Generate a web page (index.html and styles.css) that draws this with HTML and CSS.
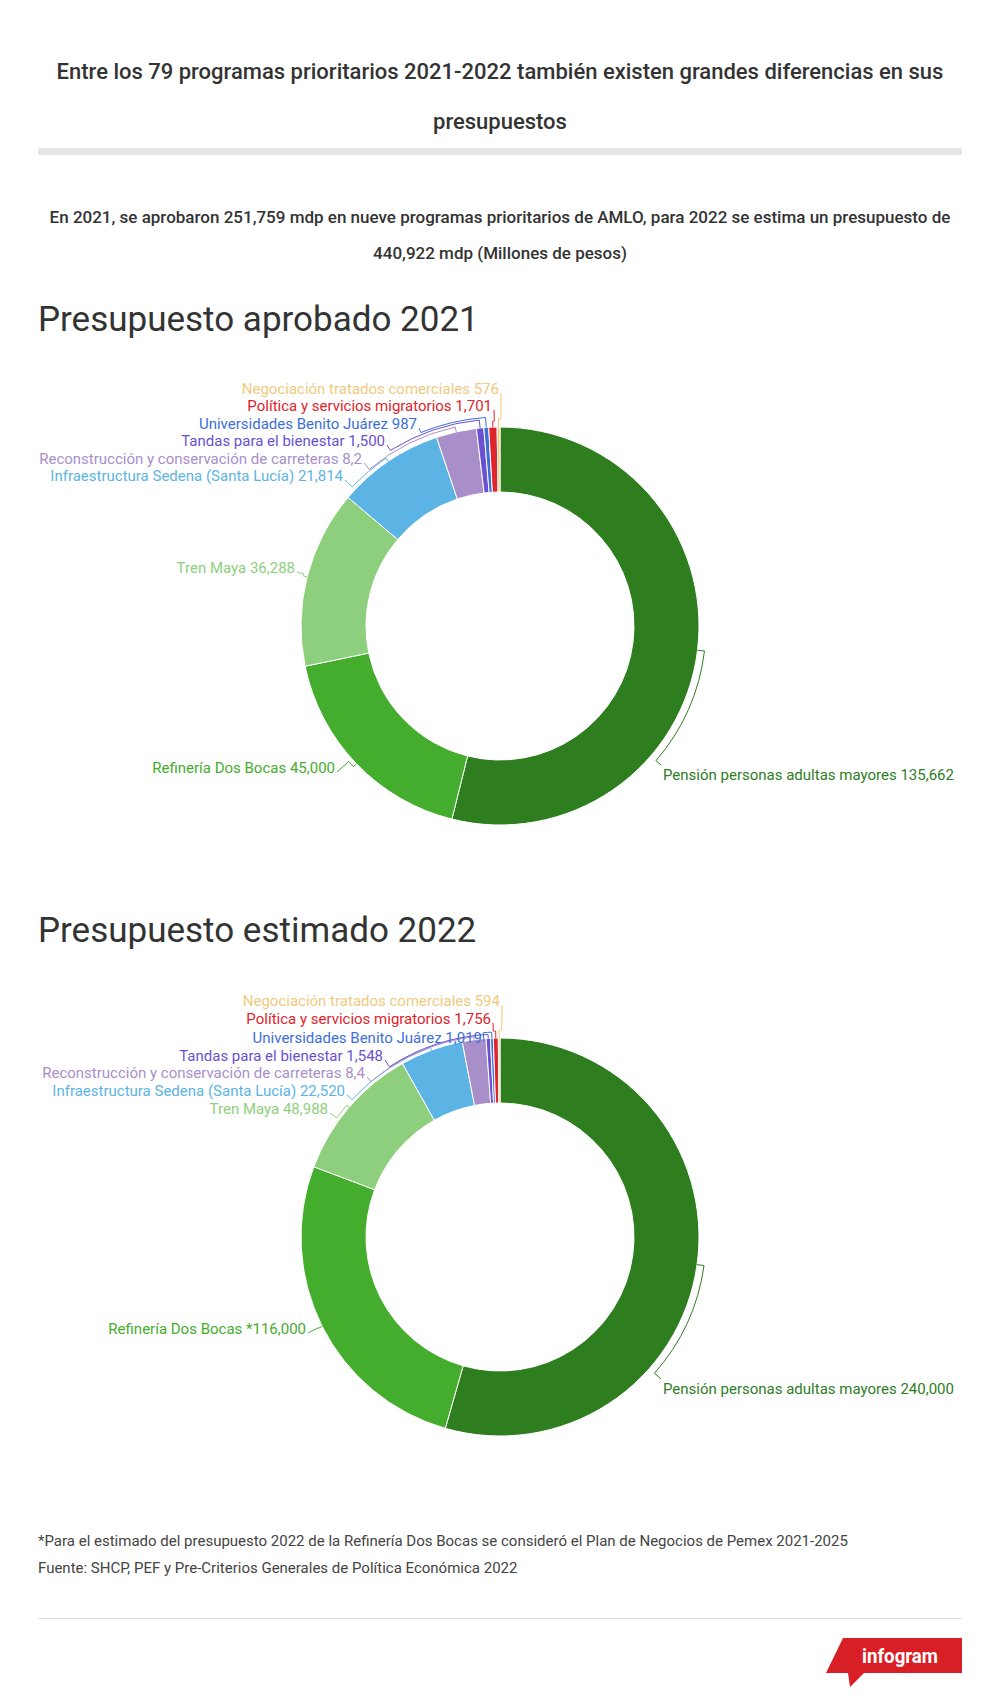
FILE: index.html
```html
<!DOCTYPE html>
<html lang="es">
<head>
<meta charset="utf-8">
<title>Programas prioritarios 2021-2022</title>
<link rel="stylesheet" href="styles.css">
</head>
<body>
<main class="page">
  <h1 class="title">Entre los 79 programas prioritarios 2021-2022 también existen grandes diferencias en sus presupuestos</h1>
  <div class="bar"></div>
  <p class="subtitle">En 2021, se aprobaron 251,759 mdp en nueve programas prioritarios de AMLO, para 2022 se estima un presupuesto de 440,922 mdp (Millones de pesos)</p>

  <section class="chart chart-first">
    <h2 class="chart-title">Presupuesto aprobado 2021</h2>
    <svg class="donut" width="1000" height="569" viewBox="0 0 1000 569" data-cx="500" data-cy="285" data-r="199" data-ir="134">
      <g class="labels">
        <text class="lbl pension" x="663" y="439" text-anchor="start" data-v="135662" data-g="7">Pensión personas adultas mayores 135,662</text>
        <text class="lbl refineria" x="335" y="432" text-anchor="end" data-v="45000" data-g="4">Refinería Dos Bocas 45,000</text>
        <text class="lbl tren" x="295" y="232" text-anchor="end" data-v="36288" data-g="4">Tren Maya 36,288</text>
        <text class="lbl infra" x="343" y="140" text-anchor="end" data-v="21814" data-g="4">Infraestructura Sedena (Santa Lucía) 21,814</text>
        <text class="lbl recon" x="362" y="123" text-anchor="end" data-v="8231" data-g="5">Reconstrucción y conservación de carreteras 8,2</text>
        <text class="lbl tandas" x="385" y="105" text-anchor="end" data-v="1500" data-g="8">Tandas para el bienestar 1,500</text>
        <text class="lbl univ" x="417" y="88" text-anchor="end" data-v="987" data-g="10">Universidades Benito Juárez 987</text>
        <text class="lbl politica" x="492" y="70" text-anchor="end" data-v="1701" data-g="6">Política y servicios migratorios 1,701</text>
        <text class="lbl negociacion" x="499" y="53" text-anchor="end" data-v="576" data-g="8">Negociación tratados comerciales 576</text>
      </g>
    </svg>
  </section>

  <section class="chart">
    <h2 class="chart-title">Presupuesto estimado 2022</h2>
    <svg class="donut" width="1000" height="569" viewBox="0 0 1000 569" data-cx="500" data-cy="285" data-r="199" data-ir="134">
      <g class="labels">
        <text class="lbl pension" x="663" y="442" text-anchor="start" data-v="240000" data-g="7">Pensión personas adultas mayores 240,000</text>
        <text class="lbl refineria" x="306" y="382" text-anchor="end" data-v="116000" data-g="4">Refinería Dos Bocas *116,000</text>
        <text class="lbl tren" x="328" y="162" text-anchor="end" data-v="48988" data-g="3">Tren Maya 48,988</text>
        <text class="lbl infra" x="345" y="144" text-anchor="end" data-v="22520" data-g="3">Infraestructura Sedena (Santa Lucía) 22,520</text>
        <text class="lbl recon" x="365" y="126" text-anchor="end" data-v="8497" data-g="3">Reconstrucción y conservación de carreteras 8,4</text>
        <text class="lbl tandas" x="383" y="109" text-anchor="end" data-v="1548" data-g="4">Tandas para el bienestar 1,548</text>
        <text class="lbl univ" x="482" y="91" text-anchor="end" data-v="1019" data-g="6">Universidades Benito Juárez 1,019</text>
        <text class="lbl politica" x="491" y="72" text-anchor="end" data-v="1756" data-g="7">Política y servicios migratorios 1,756</text>
        <text class="lbl negociacion" x="500" y="54" text-anchor="end" data-v="594" data-g="8">Negociación tratados comerciales 594</text>
      </g>
    </svg>
  </section>

  <footer class="notes">
    <p>*Para el estimado del presupuesto 2022 de la Refinería Dos Bocas se consideró el Plan de Negocios de Pemex 2021-2025</p>
    <p>Fuente: SHCP, PEF y Pre-Criterios Generales de Política Económica 2022</p>
  </footer>
  <div class="rule"></div>
  <div class="brand">
    <svg class="logo" width="136" height="49" viewBox="0 0 136 49">
      <path class="logo-shape" d="M17 0H136V35H38L24 49L22 35H0Z"/>
      <text class="logo-text" x="36" y="25" textLength="76" lengthAdjust="spacingAndGlyphs">infogram</text>
    </svg>
  </div>
</main>
<script src="script.js"></script>
</body>
</html>
```

FILE: styles.css
```css
* { box-sizing: border-box; }
html, body { margin: 0; background: #fff; }
body {
  font-family: Roboto, "Liberation Sans", Arial, sans-serif;
  color: #333;
}
.page {
  width: 1000px;
  padding: 47px 38px 20px;
}
.title {
  margin: 0;
  font-size: 22px;
  line-height: 50px;
  font-weight: 500;
  text-align: center;
  color: #333;
}
.bar {
  height: 7px;
  margin-top: 1px;
  background: #e6e6e6;
}
.subtitle {
  margin: 44px 0 0;
  font-size: 17px;
  line-height: 36px;
  font-weight: 500;
  text-align: center;
  color: #333;
}
.chart-first { margin-top: 28px; }
.chart-title {
  margin: 0;
  font-size: 35px;
  line-height: 42px;
  font-weight: 400;
  color: #333;
}
.donut {
  display: block;
  width: 1000px;
  height: 569px;
  margin: 0 -38px;
  overflow: visible;
}
.lbl {
  font-family: Roboto, "Liberation Sans", Arial, sans-serif;
  font-size: 15px;
  font-weight: 400;
  fill: var(--c);
}
.slice { fill: var(--c); stroke: #fff; stroke-width: 1; }
.leader { fill: none; stroke: var(--c); stroke-width: 1; }

.pension { --c: #2e7d1f; }
.refineria { --c: #45ad2d; }
.tren { --c: #8ecf7e; }
.infra { --c: #5cb4e4; }
.recon { --c: #a88fca; }
.tandas { --c: #6a51d2; }
.univ { --c: #3d6fd9; }
.politica { --c: #e0242b; }
.negociacion { --c: #f3c673; }
.lbl.negociacion { fill: #efca80; }

.notes {
  margin-top: 7px;
  font-size: 15px;
  line-height: 27px;
  color: #444;
}
.notes p { margin: 0; }
.rule {
  margin-top: 36px;
  height: 1px;
  background: #e2e2e2;
}
.brand {
  display: flex;
  justify-content: flex-end;
  margin-top: 19px;
}
.logo { display: block; }
.logo-shape { fill: #d91f26; }
.logo-text {
  font-family: Roboto, "Liberation Sans", Arial, sans-serif;
  font-size: 21px;
  font-weight: 700;
  fill: #fff;
}
```

FILE: script.js
```js
(function () {
  var NS = 'http://www.w3.org/2000/svg';
  function pt(cx, cy, r, deg) {
    var a = deg * Math.PI / 180;
    return [cx + r * Math.sin(a), cy - r * Math.cos(a)];
  }
  function f(p) { return p[0].toFixed(2) + ' ' + p[1].toFixed(2); }

  var svgs = document.querySelectorAll('svg.donut');
  Array.prototype.forEach.call(svgs, function (svg) {
    var cx = +svg.getAttribute('data-cx');
    var cy = +svg.getAttribute('data-cy');
    var R = +svg.getAttribute('data-r');
    var r = +svg.getAttribute('data-ir');
    var texts = svg.querySelectorAll('text.lbl');
    var total = 0;
    Array.prototype.forEach.call(texts, function (t) { total += +t.getAttribute('data-v'); });

    var gSlices = document.createElementNS(NS, 'g');
    var gLeaders = document.createElementNS(NS, 'g');
    svg.insertBefore(gLeaders, svg.firstChild);
    svg.insertBefore(gSlices, svg.firstChild);

    var acc = 0;
    Array.prototype.forEach.call(texts, function (t) {
      var key = t.getAttribute('class').replace('lbl', '').trim();
      var v = +t.getAttribute('data-v');
      var a0 = acc / total * 360;
      acc += v;
      var a1 = acc / total * 360;
      var large = (a1 - a0) > 180 ? 1 : 0;
      var o0 = pt(cx, cy, R, a0), o1 = pt(cx, cy, R, a1);
      var i0 = pt(cx, cy, r, a0), i1 = pt(cx, cy, r, a1);
      var p = document.createElementNS(NS, 'path');
      p.setAttribute('class', 'slice ' + key);
      p.setAttribute('d', 'M' + f(o0) + ' A' + R + ' ' + R + ' 0 ' + large + ' 1 ' + f(o1) +
        ' L' + f(i1) + ' A' + r + ' ' + r + ' 0 ' + large + ' 0 ' + f(i0) + ' Z');
      gSlices.appendChild(p);

      var m = (a0 + a1) / 2;
      var g = +t.getAttribute('data-g');
      var Rg = R + g;
      var x = +t.getAttribute('x'), y = +t.getAttribute('y');
      var anchor = t.getAttribute('text-anchor') === 'start' ? [x - 2, y - 15] : [x + 2, y - 1];
      var th = Math.atan2(anchor[0] - cx, -(anchor[1] - cy)) * 180 / Math.PI;
      if (th < 0) th += 360;
      var diff = m - th;
      while (diff > 180) diff -= 360;
      while (diff <= -180) diff += 360;
      var sweep = diff > 0 ? 1 : 0;
      var p1 = pt(cx, cy, Rg, th), p2 = pt(cx, cy, Rg, m), p3 = pt(cx, cy, R, m);
      var l = document.createElementNS(NS, 'path');
      l.setAttribute('class', 'leader ' + key);
      l.setAttribute('d', 'M' + f(anchor) + ' L' + f(p1) + ' A' + Rg + ' ' + Rg + ' 0 0 ' + sweep + ' ' + f(p2) + ' L' + f(p3));
      gLeaders.appendChild(l);
    });
  });
})();
```
